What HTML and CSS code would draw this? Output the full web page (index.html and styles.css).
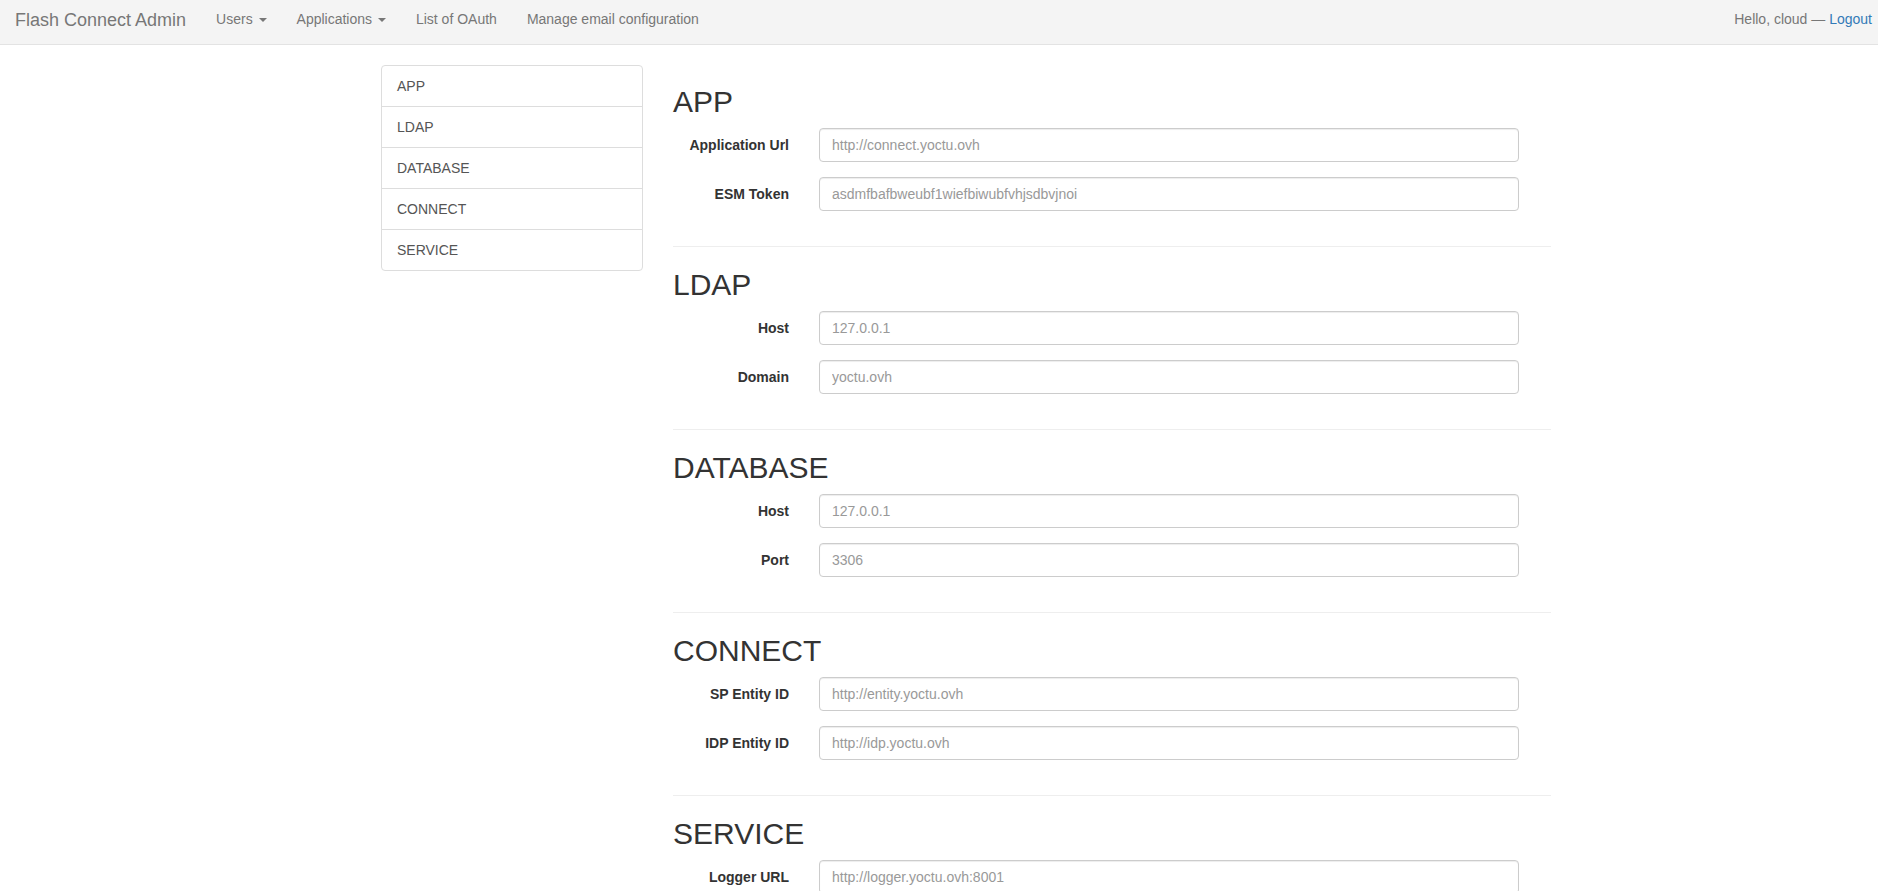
FILE: index.html
```html
<!DOCTYPE html>
<html lang="en">
<head>
<meta charset="utf-8">
<title>Flash Connect Admin</title>
<link rel="stylesheet" href="styles.css">
</head>
<body>
<nav class="navbar">
  <div class="nav-left">
    <a class="brand" href="#">Flash Connect Admin</a>
    <ul class="nav-links">
      <li><a href="#">Users <span class="caret"></span></a></li>
      <li><a href="#">Applications <span class="caret"></span></a></li>
      <li><a href="#">List of OAuth</a></li>
      <li><a href="#">Manage email configuration</a></li>
    </ul>
  </div>
  <p class="nav-text">Hello, cloud — <a href="#" class="logout">Logout</a></p>
</nav>

<div class="layout">
  <aside class="sidebar">
    <a href="#app" class="list-item">APP</a>
    <a href="#ldap" class="list-item">LDAP</a>
    <a href="#database" class="list-item">DATABASE</a>
    <a href="#connect" class="list-item">CONNECT</a>
    <a href="#service" class="list-item">SERVICE</a>
  </aside>

  <main class="content">
    <section class="section" id="app">
      <h2>APP</h2>
      <div class="fields">
        <div class="form-row"><label>Application Url</label><input type="text" placeholder="http://connect.yoctu.ovh"></div>
        <div class="form-row"><label>ESM Token</label><input type="text" placeholder="asdmfbafbweubf1wiefbiwubfvhjsdbvjnoi"></div>
      </div>
    </section>
    <hr>
    <section class="section" id="ldap">
      <h2>LDAP</h2>
      <div class="fields">
        <div class="form-row"><label>Host</label><input type="text" placeholder="127.0.0.1"></div>
        <div class="form-row"><label>Domain</label><input type="text" placeholder="yoctu.ovh"></div>
      </div>
    </section>
    <hr>
    <section class="section" id="database">
      <h2>DATABASE</h2>
      <div class="fields">
        <div class="form-row"><label>Host</label><input type="text" placeholder="127.0.0.1"></div>
        <div class="form-row"><label>Port</label><input type="text" placeholder="3306"></div>
      </div>
    </section>
    <hr>
    <section class="section" id="connect">
      <h2>CONNECT</h2>
      <div class="fields">
        <div class="form-row"><label>SP Entity ID</label><input type="text" placeholder="http://entity.yoctu.ovh"></div>
        <div class="form-row"><label>IDP Entity ID</label><input type="text" placeholder="http://idp.yoctu.ovh"></div>
      </div>
    </section>
    <hr>
    <section class="section" id="service">
      <h2>SERVICE</h2>
      <div class="fields">
        <div class="form-row"><label>Logger URL</label><input type="text" placeholder="http://logger.yoctu.ovh:8001"></div>
      </div>
    </section>
  </main>
</div>
</body>
</html>
```

FILE: styles.css
```css
* { box-sizing: border-box; }
html, body { margin: 0; padding: 0; }
body {
  font-family: "Liberation Sans", Arial, Helvetica, sans-serif;
  font-size: 14px;
  line-height: 20px;
  color: #333;
  background: #fff;
}
a { text-decoration: none; }

.navbar {
  display: flex;
  justify-content: space-between;
  align-items: flex-start;
  height: 45px;
  background-color: #f4f4f4;
  border-bottom: 1px solid #e3e3e3;
}
.nav-left { display: flex; align-items: flex-start; }
.brand {
  display: block;
  padding: 10px 15px;
  font-size: 18px;
  line-height: 20px;
  color: #777;
}
.nav-links {
  display: flex;
  list-style: none;
  margin: 0;
  padding: 0;
}
.nav-links a {
  display: block;
  padding: 9px 15px;
  line-height: 20px;
  color: #777;
}
.caret {
  display: inline-block;
  width: 0;
  height: 0;
  margin-left: 2px;
  vertical-align: middle;
  border-top: 4px solid #777;
  border-left: 4px solid transparent;
  border-right: 4px solid transparent;
}
.nav-text {
  margin: 0;
  padding: 9px 6px 0 0;
  line-height: 20px;
  color: #777;
}
.logout { color: #337ab7; }

.layout {
  display: flex;
  align-items: flex-start;
  gap: 30px;
  margin-top: 20px;
  padding-left: 381px;
}
.sidebar {
  width: 262px;
  display: flex;
  flex-direction: column;
}
.list-item {
  display: block;
  padding: 10px 15px;
  margin-bottom: -1px;
  border: 1px solid #ddd;
  color: #555;
  background: #fff;
  line-height: 20px;
}
.list-item:first-child { border-radius: 4px 4px 0 0; }
.list-item:last-child { border-radius: 0 0 4px 4px; margin-bottom: 0; }

.content { width: 878px; }
.section h2 {
  margin: 20px 0 10px;
  font-size: 30px;
  line-height: 33px;
  font-weight: 500;
  color: #333;
}
.fields { display: flow-root; }
.form-row {
  display: grid;
  grid-template-columns: 116px 700px;
  column-gap: 30px;
  margin-bottom: 15px;
}
.form-row label {
  padding-top: 7px;
  text-align: right;
  font-weight: bold;
  line-height: 20px;
}
.form-row input {
  display: block;
  width: 700px;
  height: 34px;
  padding: 6px 12px;
  font-family: inherit;
  font-size: 14px;
  line-height: 20px;
  color: #555;
  background: #fff;
  border: 1px solid #ccc;
  border-radius: 4px;
  box-shadow: inset 0 1px 1px rgba(0,0,0,0.075);
}
.form-row input::placeholder { color: #999; }
hr {
  margin: 20px 0 21px;
  border: 0;
  border-top: 1px solid #eee;
}
```
